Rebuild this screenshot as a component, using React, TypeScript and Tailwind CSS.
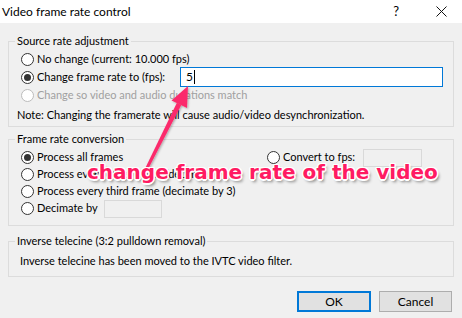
import React from "react";

const ui = "font-['Lato','Liberation_Sans',sans-serif] text-[11px] text-black";

function Radio({checked = false, disabled = false}: {checked?: boolean; disabled?: boolean}) {
	return (
		<span
			className={`flex h-[13px] w-[13px] shrink-0 items-center justify-center rounded-full border bg-white ${disabled ? "border-[#bcbcbc]" : "border-[#333]"}`}>
			{checked && <span className="h-[7px] w-[7px] rounded-full bg-[#333]"/>}
		</span>
	);
}

function Option({label, checked, disabled, className = ""}: {label: string; checked?: boolean; disabled?: boolean; className?: string}) {
	return (
		<div className={`flex items-center gap-[3px] ${className}`}>
			<Radio checked={checked} disabled={disabled}/>
			<span className={`whitespace-nowrap ${disabled ? "text-[#a0a0a0]" : ""}`}>{label}</span>
		</div>
	);
}

function Group({title, className = "", children}: {title: string; className?: string; children: React.ReactNode}) {
	return (
		<fieldset className={`mx-[8px] border border-[#dcdcdc] px-[6px] ${className}`}>
			<legend className="px-[2px] leading-[16px]">{title}</legend>
			{children}
		</fieldset>
	);
}

export default function App() {
	return (
		<div className={`relative h-[318px] w-[462px] overflow-hidden bg-[#f0f0f0] ${ui}`}>
			<div className="flex h-[23px] items-center bg-white pl-[2px] text-[12px]">
				<span className="flex-1 leading-none">Video frame rate control</span>
				<span className="mr-[37px] text-[13px] leading-none">?</span>
				<svg width="11" height="11" viewBox="0 0 11 11" className="mr-[15px]">
					<path d="M0.5 0.5 L10.5 10.5 M10.5 0.5 L0.5 10.5" stroke="#111" strokeWidth="1"/>
				</svg>
			</div>

			<Group title="Source rate adjustment" className="mt-[10px] pb-[1px]">
				<div className="ml-[6px] mt-[1px]">
					<Option label="No change (current: 10.000 fps)" className="h-[18px]"/>
					<div className="flex h-[18px] items-center">
						<div className="w-[159px]">
							<Option label="Change frame rate to (fps):" checked/>
						</div>
						<div className="flex h-[20px] w-[263px] items-center border border-[#0078d7] bg-white pl-[5px] text-[12px]">
							5<span className="ml-px h-[14px] w-px bg-black"/>
						</div>
					</div>
					<Option label="Change so video and audio durations match" disabled className="h-[18px]"/>
				</div>
				<div className="ml-[2px] mt-[2px] flex h-[19px] items-center">
					Note: Changing the framerate will cause audio/video desynchronization.
				</div>
			</Group>

			<Group title="Frame rate conversion" className="mt-[4px] pb-[8px]">
				<div className="ml-[6px] mt-[2px]">
					<div className="flex h-[17px] items-center">
						<Option label="Process all frames" checked className="w-[246px]"/>
						<Option label="Convert to fps:"/>
						<div className="ml-[8px] h-[18px] w-[59px] border border-[#d9d9d9] bg-[#f0f0f0]"/>
					</div>
					<Option label="Process every other frame (decimate by 2)" className="h-[17px]"/>
					<Option label="Process every third frame (decimate by 3)" className="h-[17px]"/>
					<div className="flex h-[17px] items-center">
						<Option label="Decimate by"/>
						<div className="ml-[6px] h-[18px] w-[58px] border border-[#d9d9d9] bg-[#f0f0f0]"/>
					</div>
				</div>
			</Group>

			<Group title="Inverse telecine (3:2 pulldown removal)" className="mt-[7px] pb-[7px]">
				<div className="ml-[5px] mt-[4px] leading-[16px]">
					Inverse telecine has been moved to the IVTC video filter.
				</div>
			</Group>

			<div className="mr-[10px] mt-[14px] flex justify-end gap-[8px]">
				<button className="h-[21px] w-[74px] border-2 border-[#0078d7] bg-[#e1e1e1] text-[12px] leading-none">OK</button>
				<button className="h-[21px] w-[73px] border border-[#adadad] bg-[#e1e1e1] text-[12px] leading-none">Cancel</button>
			</div>

			{/* callout over the dialog */}
			<div className="pointer-events-none absolute inset-0">
				<svg className="absolute inset-0" width="462" height="318">
					<defs>
						<filter id="sh" x="-20%" y="-20%" width="140%" height="140%">
							<feDropShadow dx="1" dy="1" stdDeviation="1" floodColor="#000" floodOpacity="0.3"/>
						</filter>
					</defs>
					<g filter="url(#sh)" fill="#fb2c6c">
						<polygon points="176.9,102.8 181.3,105 148.3,168.7 145.7,167.3"/>
						<polygon points="188,86 171.5,100.5 187,108"/>
					</g>
				</svg>
				<p className="absolute left-[87px] top-[162px] m-0 whitespace-nowrap font-['DejaVu_Sans'] text-[20px] font-bold leading-[20px] text-[#ff1b62] [text-shadow:-1px_-1px_0_#fff,1px_-1px_0_#fff,-1px_1px_0_#fff,1px_1px_0_#fff,0_-1.5px_0_#fff,0_1.5px_0_#fff,-1.5px_0_0_#fff,1.5px_0_0_#fff,2px_3px_3px_rgba(0,0,0,0.45)]">
					change frame rate of the video
				</p>
			</div>
		</div>
	);
}
